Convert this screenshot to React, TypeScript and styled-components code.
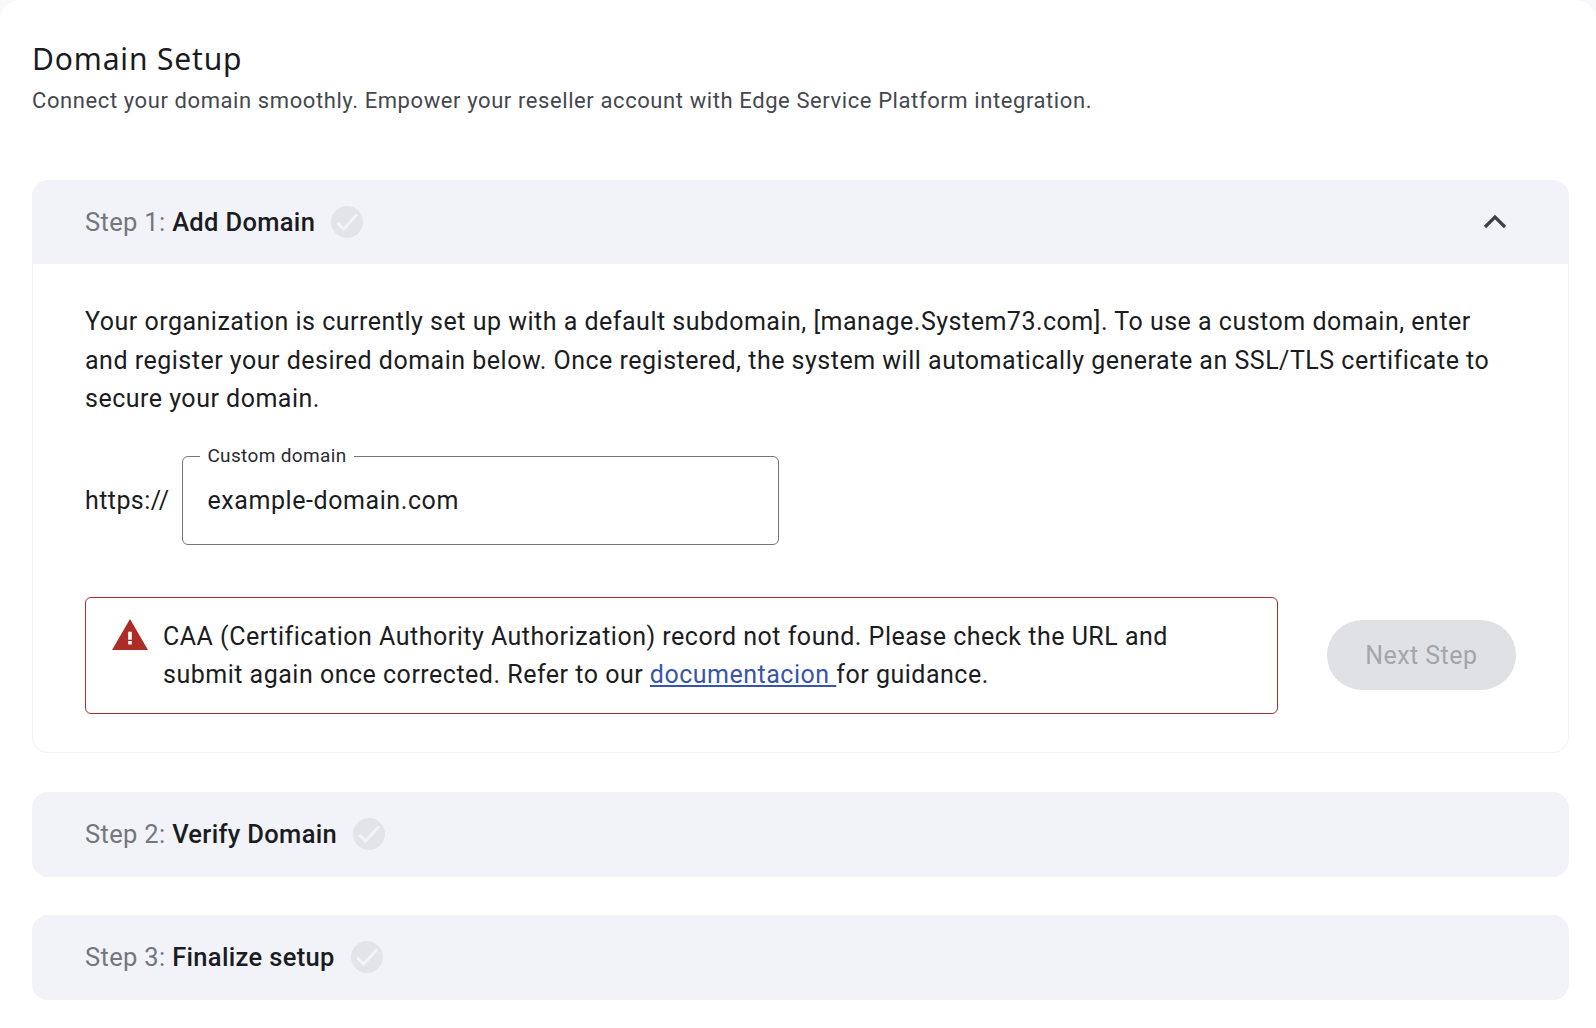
import React from "react";
import styled, { createGlobalStyle } from "styled-components";

const Global = createGlobalStyle`
  html, body { margin: 0; padding: 0; background: #f8f8fb; }
  * { box-sizing: border-box; }
  body { font-family: Roboto, "Liberation Sans", sans-serif; color: #1b1c21; }
`;

const Page = styled.main`
  width: 1596px;
  height: 1028px;
  padding: 38px 27px 0 32px;
  overflow: hidden;
  background: #ffffff;
  border-radius: 20px 20px 0 0;
`;

const Title = styled.h1`
  margin: 0 0 5px;
  font-family: "Noto Sans", sans-serif;
  font-size: 30px;
  line-height: 42px;
  font-weight: 400;
  letter-spacing: 0.85px;
  color: #1a1b20;
`;

const Subtitle = styled.p`
  margin: 0 0 63px;
  font-size: 22px;
  line-height: 32px;
  letter-spacing: 0.59px;
  color: #45474f;
`;

const Steps = styled.div`
  display: flex;
  flex-direction: column;
  gap: 38px;
`;

const Step = styled.section<{ $open?: boolean }>`
  margin-bottom: ${(p) => (p.$open ? "1px" : "0")};
`;

const StepHeader = styled.header<{ $open?: boolean }>`
  display: flex;
  align-items: center;
  height: ${(p) => (p.$open ? "84px" : "85px")};
  padding: 0 62px ${(p) => (p.$open ? "0" : "1px")} 53px;
  background: #f2f3f8;
  border-radius: ${(p) => (p.$open ? "16px 16px 0 0" : "16px")};
`;

const StepLabel = styled.span`
  font-size: 25.5px;
  letter-spacing: 0.33px;
  color: #74767d;
`;

const StepName = styled.strong`
  font-weight: 500;
  color: #1b1c21;
`;

const Check = styled.span`
  display: block;
  width: 32px;
  height: 32px;
  margin-left: 16px;
  border-radius: 50%;
  background: #e2e4ea;
`;

const CheckIcon = styled.svg`
  display: block;
  width: 32px;
  height: 32px;
`;

const Chevron = styled.svg`
  margin: 0 0 3px auto;
  width: 24px;
  height: 16px;
`;

const StepBody = styled.div`
  height: 489px;
  padding: 39px 52px 0 52px;
  background: #fff;
  border: 1px solid #f1f2f7;
  border-top: 0;
  border-radius: 0 0 16px 16px;
`;

const Intro = styled.p`
  margin: 0;
  max-width: 1420px;
  font-size: 25px;
  line-height: 38.5px;
  letter-spacing: 0.5px;
  color: #1b1c21;
`;

const DomainRow = styled.div`
  display: flex;
  align-items: center;
  gap: 13px;
  margin-top: 37px;
`;

const Prefix = styled.span`
  font-size: 25px;
  letter-spacing: 0.42px;
`;

const Field = styled.div`
  position: relative;
  display: flex;
  align-items: center;
  width: 597px;
  height: 89px;
  padding: 0 24px;
  border: 1px solid #74767d;
  border-radius: 6px;
  font-size: 25px;
  letter-spacing: 0.58px;
`;

const FieldLabel = styled.label`
  position: absolute;
  top: -12px;
  left: 17px;
  padding: 0 7px;
  background: #fff;
  font-size: 19px;
  line-height: 22px;
  letter-spacing: 0.35px;
  color: #2a2b31;
`;

const ActionRow = styled.div`
  display: flex;
  align-items: center;
  margin-top: 52px;
`;

const Alert = styled.div`
  display: flex;
  align-items: flex-start;
  gap: 15px;
  width: 1196px;
  height: 117px;
  padding: 20px 60px 0 26px;
  border: 1.5px solid #ad2d26;
  border-radius: 6px;
  font-size: 25px;
  line-height: 38.5px;
  letter-spacing: 0.5px;
`;

const AlertIcon = styled.svg`
  flex: none;
  width: 36px;
  height: 31px;
  margin-top: 1.5px;
`;

const DocLink = styled.a`
  color: #3955a8;
  text-decoration: underline;
`;

const NextButton = styled.button`
  width: 190px;
  height: 70px;
  margin-left: 49px;
  border: 0;
  border-radius: 35px;
  background: #e0e1e5;
  color: #a4a5a9;
  font-family: inherit;
  font-size: 25px;
  letter-spacing: 0.45px;
`;

const CheckMark = () => (
  <Check>
    <CheckIcon viewBox="0 0 32 32" fill="none">
      <path d="M6.5 17 L12.5 23 L26 8.5" stroke="#f2f3f8" strokeWidth="3" />
    </CheckIcon>
  </Check>
);

export default function App() {
  return (
    <Page>
      <Global />
      <Title>Domain Setup</Title>
      <Subtitle>
        Connect your domain smoothly. Empower your reseller account with Edge Service Platform integration.
      </Subtitle>
      <Steps>
        <Step $open>
          <StepHeader $open>
            <StepLabel>
              Step 1: <StepName>Add Domain</StepName>
            </StepLabel>
            <CheckMark />
            <Chevron viewBox="0 0 24 16" fill="none">
              <path d="M2 14 L12 4 L22 14" stroke="#3f4046" strokeWidth="3.2" />
            </Chevron>
          </StepHeader>
          <StepBody>
            <Intro>
              Your organization is currently set up with a default subdomain, [manage.System73.com]. To use a custom
              domain, enter and register your desired domain below. Once registered, the system will automatically
              generate an SSL/TLS certificate to secure your domain.
            </Intro>
            <DomainRow>
              <Prefix>https://</Prefix>
              <Field>
                <FieldLabel>Custom domain</FieldLabel>
                example-domain.com
              </Field>
            </DomainRow>
            <ActionRow>
              <Alert>
                <AlertIcon viewBox="0 0 36 31">
                  <path
                    fillRule="evenodd"
                    d="M18 0 L36 31 H0 Z M16.2 12.7 V20.7 H19.8 V12.7 Z M16.2 22 V25.4 H19.8 V22 Z"
                    fill="#ad2d26"
                  />
                </AlertIcon>
                <span>
                  CAA (Certification Authority Authorization) record not found. Please check the URL and submit again
                  once corrected. Refer to our <DocLink href="#">documentacion </DocLink>for guidance.
                </span>
              </Alert>
              <NextButton disabled>Next Step</NextButton>
            </ActionRow>
          </StepBody>
        </Step>
        <Step>
          <StepHeader>
            <StepLabel>
              Step 2: <StepName>Verify Domain</StepName>
            </StepLabel>
            <CheckMark />
          </StepHeader>
        </Step>
        <Step>
          <StepHeader>
            <StepLabel>
              Step 3: <StepName>Finalize setup</StepName>
            </StepLabel>
            <CheckMark />
          </StepHeader>
        </Step>
      </Steps>
    </Page>
  );
}
